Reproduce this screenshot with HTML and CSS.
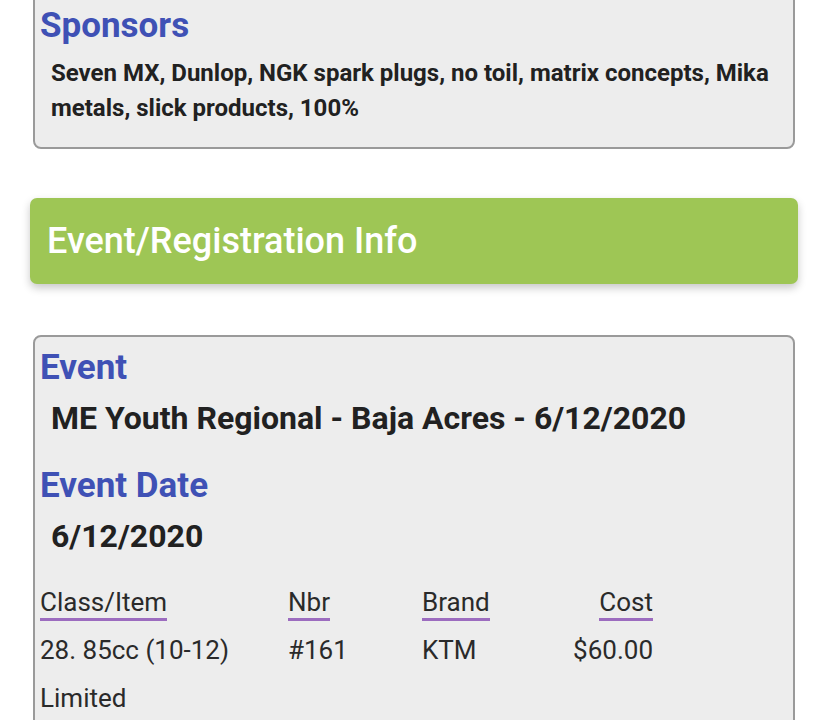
FILE: index.html
```html
<!DOCTYPE html>
<html>
<head>
<meta charset="utf-8">
<link rel="stylesheet" href="styles.css">
</head>
<body>
<div class="page">
  <section class="card card-top">
    <h3 class="label">Sponsors</h3>
    <p class="sponsors">Seven MX, Dunlop, NGK spark plugs, no toil, matrix concepts, Mika metals, slick products, 100%</p>
  </section>

  <div class="banner">Event/Registration Info</div>

  <section class="card card-event">
    <h3 class="label">Event</h3>
    <p class="value">ME Youth Regional - Baja Acres - 6/12/2020</p>
    <h3 class="label label-gap">Event Date</h3>
    <p class="value">6/12/2020</p>

    <div class="items">
      <div class="head"><span>Class/Item</span></div>
      <div class="head"><span>Nbr</span></div>
      <div class="head"><span>Brand</span></div>
      <div class="head right"><span>Cost</span></div>
      <div class="cell">28. 85cc (10-12) Limited</div>
      <div class="cell">#161</div>
      <div class="cell">KTM</div>
      <div class="cell right">$60.00</div>
    </div>
  </section>
</div>
</body>
</html>
```

FILE: styles.css
```css
html, body {
  margin: 0;
  padding: 0;
  background: #ffffff;
  font-family: Roboto, "Liberation Sans", sans-serif;
  color: #212121;
  overflow: hidden;
}

.page {
  width: 828px;
  display: flex;
  flex-direction: column;
}

.card {
  margin: 0 33px;
  background: #ededed;
  border: 2px solid #9a9a9a;
  border-radius: 8px;
  padding: 0 5px;
}

.card-top {
  margin-top: -40px;
  padding-top: 41px;
  padding-bottom: 21px;
}

.label {
  margin: 0;
  color: #3f51b5;
  font-size: 35px;
  font-weight: 700;
  line-height: 46px;
}

.sponsors {
  margin: 7px 0 0;
  padding-left: 11px;
  font-size: 24px;
  font-weight: 700;
  line-height: 35px;
}

.banner {
  margin: 49px 30px 51px;
  height: 86px;
  box-sizing: border-box;
  background: #9ec655;
  border-radius: 7px;
  box-shadow: 0 4px 8px rgba(0, 0, 0, 0.22);
  color: #ffffff;
  font-size: 36px;
  font-weight: 500;
  padding-left: 17px;
  display: flex;
  align-items: center;
}

.card-event {
  padding-top: 8px;
  padding-bottom: 40px;
}

.value {
  margin: 0;
  padding-left: 11px;
  font-size: 32px;
  font-weight: 700;
  line-height: 54px;
}

.label-gap {
  margin-top: 18px;
}

.items {
  margin-top: 24px;
  display: grid;
  grid-template-columns: 248px 134px 118px 113px;
  font-size: 26px;
  color: #2a2a2a;
}

.head {
  line-height: 30px;
  padding-bottom: 5px;
}

.head span {
  display: inline-block;
  border-bottom: 3px solid #9c6cbf;
  padding-bottom: 1px;
}

.cell {
  line-height: 48px;
}

.right {
  text-align: right;
}
```
